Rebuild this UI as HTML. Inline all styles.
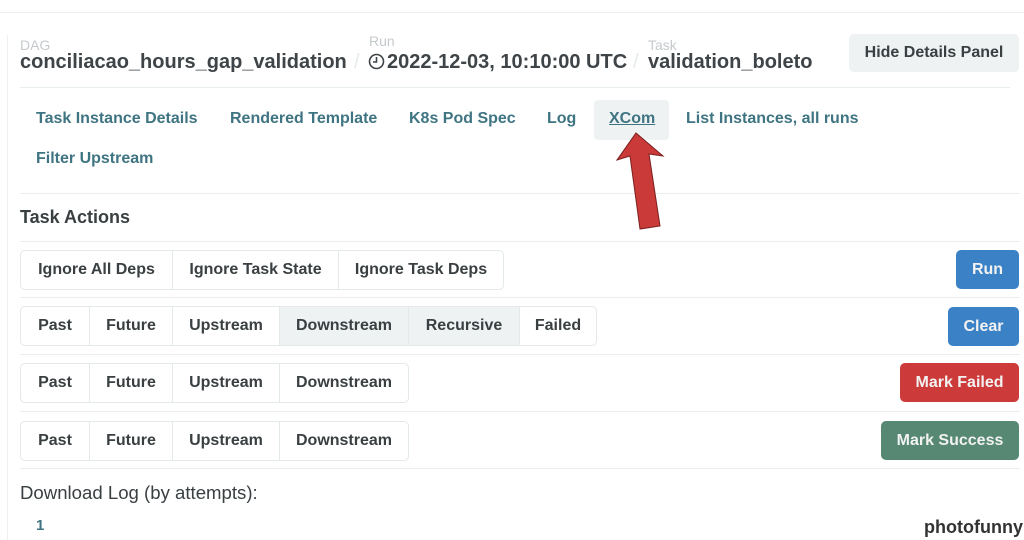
<!DOCTYPE html>
<html><head><style>
body{margin:0;width:1024px;height:540px;background:#fff;position:relative;overflow:hidden;font-family:"Liberation Sans",sans-serif;color:#333}
.a{position:absolute;white-space:nowrap}
.lbl{font-size:14px;color:#c4cacc}
.big{font-size:20px;font-weight:bold;color:#3e4447}
.sl{font-size:20px;color:#e6eaeb}
.tab{font-size:16px;font-weight:bold;color:#3f7482}
.hr{position:absolute;height:1px;background:#e8eeee}
.grp{position:absolute;display:flex;border:1px solid #e3e8e8;border-radius:5px;overflow:hidden}
.grp div{border-right:1px solid #e3e8e8;font-size:16px;font-weight:bold;color:#3a4042;display:flex;align-items:center;justify-content:center;height:38px}
.grp div:last-child{border-right:none}
.btn{position:absolute;border-radius:5px;color:#f2f2f2;font-size:16px;font-weight:bold;display:flex;align-items:center;justify-content:center}
</style></head><body>
<div class="hr" style="left:0;top:12px;width:1024px;background:#eceeee"></div>
<div style="position:absolute;left:7px;top:35px;width:1px;height:505px;background:#eef0f0"></div>
<div class="a lbl" style="left:20px;top:37px">DAG</div>
<div class="a big" style="left:20px;top:51px">conciliacao_hours_gap_validation</div>
<div class="a sl" style="left:354px;top:51px">/</div>
<div class="a lbl" style="left:369px;top:33px">Run</div>
<svg style="position:absolute;left:368px;top:53px" width="17" height="17"><circle cx="8.5" cy="8.5" r="7" fill="none" stroke="#3e4447" stroke-width="1.6"/><path d="M8.5 4v5h-3.5" fill="none" stroke="#3e4447" stroke-width="1.6"/></svg>
<div class="a big" style="left:387px;top:51px">2022-12-03, 10:10:00 UTC</div>
<div class="a sl" style="left:633px;top:51px">/</div>
<div class="a lbl" style="left:648px;top:37px">Task</div>
<div class="a big" style="left:648px;top:51px">validation_boleto</div>
<div class="btn" style="left:849px;top:34px;width:170px;height:38px;background:#eef2f2;color:#3a4042">Hide Details Panel</div>
<div class="hr" style="left:20px;top:87px;width:990px"></div>
<div style="position:absolute;left:594px;top:100px;width:75px;height:40px;background:#eef2f2;border-radius:4px"></div>
<div class="a tab" style="left:36px;top:110px">Task Instance Details</div>
<div class="a tab" style="left:230px;top:110px">Rendered Template</div>
<div class="a tab" style="left:409px;top:110px">K8s Pod Spec</div>
<div class="a tab" style="left:547px;top:110px">Log</div>
<div class="a tab" style="left:609px;top:110px;text-decoration:underline">XCom</div>
<div class="a tab" style="left:686px;top:110px">List Instances, all runs</div>
<div class="a tab" style="left:36px;top:150px">Filter Upstream</div>
<div class="hr" style="left:20px;top:193px;width:1000px"></div>
<div class="a" style="left:20px;top:207px;font-size:18px;font-weight:bold;color:#3a4042">Task Actions</div>
<div class="hr" style="left:20px;top:241px;width:1000px"></div>
<div class="grp" style="left:20px;top:250px"><div style="width:151px">Ignore All Deps</div><div style="width:165px">Ignore Task State</div><div style="width:164px">Ignore Task Deps</div></div>
<div class="btn" style="left:956px;top:250px;width:63px;height:39px;background:#3a81c6">Run</div>
<div class="hr" style="left:20px;top:297px;width:1000px"></div>
<div class="grp" style="left:20px;top:306px"><div style="width:68px">Past</div><div style="width:82px">Future</div><div style="width:106px">Upstream</div><div style="width:128px;background:#eef2f2">Downstream</div><div style="width:110px;background:#eef2f2">Recursive</div><div style="width:76px">Failed</div></div>
<div class="btn" style="left:948px;top:307px;width:71px;height:39px;background:#3a81c6">Clear</div>
<div class="hr" style="left:20px;top:354px;width:1000px"></div>
<div class="grp" style="left:20px;top:363px"><div style="width:68px">Past</div><div style="width:82px">Future</div><div style="width:106px">Upstream</div><div style="width:128px">Downstream</div></div>
<div class="btn" style="left:900px;top:363px;width:119px;height:39px;background:#cc3b3a">Mark Failed</div>
<div class="hr" style="left:20px;top:411px;width:1000px"></div>
<div class="grp" style="left:20px;top:421px"><div style="width:68px">Past</div><div style="width:82px">Future</div><div style="width:106px">Upstream</div><div style="width:128px">Downstream</div></div>
<div class="btn" style="left:881px;top:421px;width:138px;height:39px;background:#568874">Mark Success</div>
<div class="hr" style="left:20px;top:468px;width:1000px"></div>
<div class="a" style="left:20px;top:482px;font-size:18.6px;color:#3a4042">Download Log (by attempts):</div>
<div class="a" style="left:36px;top:517px;font-size:15px;font-weight:bold;color:#3f7482">1</div>
<div class="a" style="left:924px;top:517px;font-size:18px;font-weight:bold;color:#333;text-shadow:0 0 2px #fff">photofunny</div>
<svg style="position:absolute;left:0;top:0" width="1024" height="540"><polygon points="636,133 663,156 649,154 660,226 640,229 630,156 617,160" fill="#c93a38" stroke="#7a2020" stroke-width="1"/></svg>
</body></html>
